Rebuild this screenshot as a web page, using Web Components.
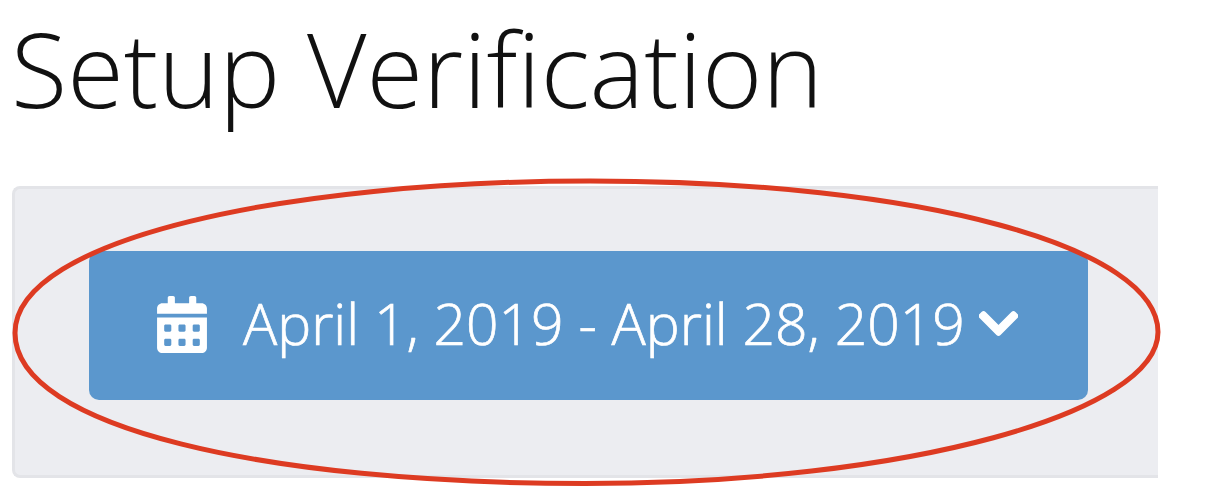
<!DOCTYPE html>
<html><head><meta charset="utf-8">
<style>
html,body{margin:0;padding:0;background:#fff;width:1206px;height:496px;overflow:hidden}
</style></head>
<body>
<setup-page>
<page-title slot="title">Setup Verification</page-title>
<date-button>April 1, 2019 - April 28, 2019</date-button>
</setup-page>
<script>
class SetupPage extends HTMLElement{constructor(){super();this.attachShadow({mode:'open'}).innerHTML=`
<style>
:host{display:block;position:relative;width:1206px;height:496px;box-sizing:border-box;padding:0 48px 0 12px;font-family:"Open Sans",sans-serif}
.panel{box-sizing:border-box;height:292px;margin-top:14px;padding:62px 0 0 74px;display:flex;align-items:flex-start;background:#ecedf1;border:solid #e3e4e8;border-width:3px 0 3px 3px;border-radius:8px 0 0 8px}
svg{position:absolute;left:0;top:0;pointer-events:none}
</style>
<slot name="title"></slot>
<div class="panel"><slot></slot></div>
<svg width="1206" height="496"><path d="M15 333C15 238 290 181 590 181C925 181 1158 248 1158 332C1158 412 910 483.5 585 483.5C267 483.5 15 428 15 333Z" fill="none" stroke="#dd3b22" stroke-width="5"/></svg>`}}
customElements.define('setup-page',SetupPage);
class PageTitle extends HTMLElement{constructor(){super();this.attachShadow({mode:'open'}).innerHTML=`
<style>:host{display:block;height:172px;margin-left:-1px;font:300 103px/136px "Open Sans",sans-serif;color:#111;white-space:nowrap}</style><slot></slot>`}}
customElements.define('page-title',PageTitle);
class DateButton extends HTMLElement{constructor(){super();this.attachShadow({mode:'open'}).innerHTML=`
<style>
:host{display:flex;align-items:center;box-sizing:border-box;width:999px;height:149px;padding-left:68px;background:#5b97cd;border-radius:10px;color:#fff;font:300 57px/1 "Open Sans",sans-serif;-webkit-text-stroke:0.7px #fff;white-space:nowrap}
.cal{width:50px;height:57px;flex:none;margin-right:36px;margin-top:-2px}
.chev{width:39px;height:45px;flex:none;margin-left:14px;margin-top:-4px}
.chev path{stroke:#fff;stroke-width:18;stroke-linejoin:round}
svg{fill:#fff}
span{display:block;margin-top:-4px}
</style>
<svg class="cal" viewBox="0 0 448 512"><path d="M0 464c0 26.5 21.5 48 48 48h352c26.5 0 48-21.5 48-48V192H0v272zm320-196c0-6.6 5.4-12 12-12h40c6.6 0 12 5.4 12 12v40c0 6.6-5.4 12-12 12h-40c-6.6 0-12-5.4-12-12v-40zm0 128c0-6.6 5.4-12 12-12h40c6.6 0 12 5.4 12 12v40c0 6.6-5.4 12-12 12h-40c-6.6 0-12-5.4-12-12v-40zM192 268c0-6.6 5.4-12 12-12h40c6.6 0 12 5.4 12 12v40c0 6.6-5.4 12-12 12h-40c-6.6 0-12-5.4-12-12v-40zm0 128c0-6.6 5.4-12 12-12h40c6.6 0 12 5.4 12 12v40c0 6.6-5.4 12-12 12h-40c-6.6 0-12-5.4-12-12v-40zM64 268c0-6.6 5.4-12 12-12h40c6.6 0 12 5.4 12 12v40c0 6.6-5.4 12-12 12H76c-6.6 0-12-5.4-12-12v-40zm0 128c0-6.6 5.4-12 12-12h40c6.6 0 12 5.4 12 12v40c0 6.6-5.4 12-12 12H76c-6.6 0-12-5.4-12-12v-40zM400 64h-48V16c0-8.8-7.2-16-16-16h-32c-8.8 0-16 7.2-16 16v48H160V16c0-8.8-7.2-16-16-16h-32c-8.8 0-16 7.2-16 16v48H48C21.5 64 0 85.5 0 112v48h448v-48c0-26.5-21.5-48-48-48z"/></svg>
<span><slot></slot></span>
<svg class="chev" viewBox="0 0 448 512"><path d="M207.029 381.476L12.686 187.132c-9.373-9.373-9.373-24.569 0-33.941l22.667-22.667c9.357-9.357 24.522-9.375 33.901-.04L224 284.505l154.745-154.021c9.379-9.335 24.544-9.317 33.901.04l22.667 22.667c9.373 9.373 9.373 24.569 0 33.941L240.971 381.476c-9.373 9.372-24.569 9.372-33.942 0z"/></svg>`}}
customElements.define('date-button',DateButton);
</script>
</body></html>
